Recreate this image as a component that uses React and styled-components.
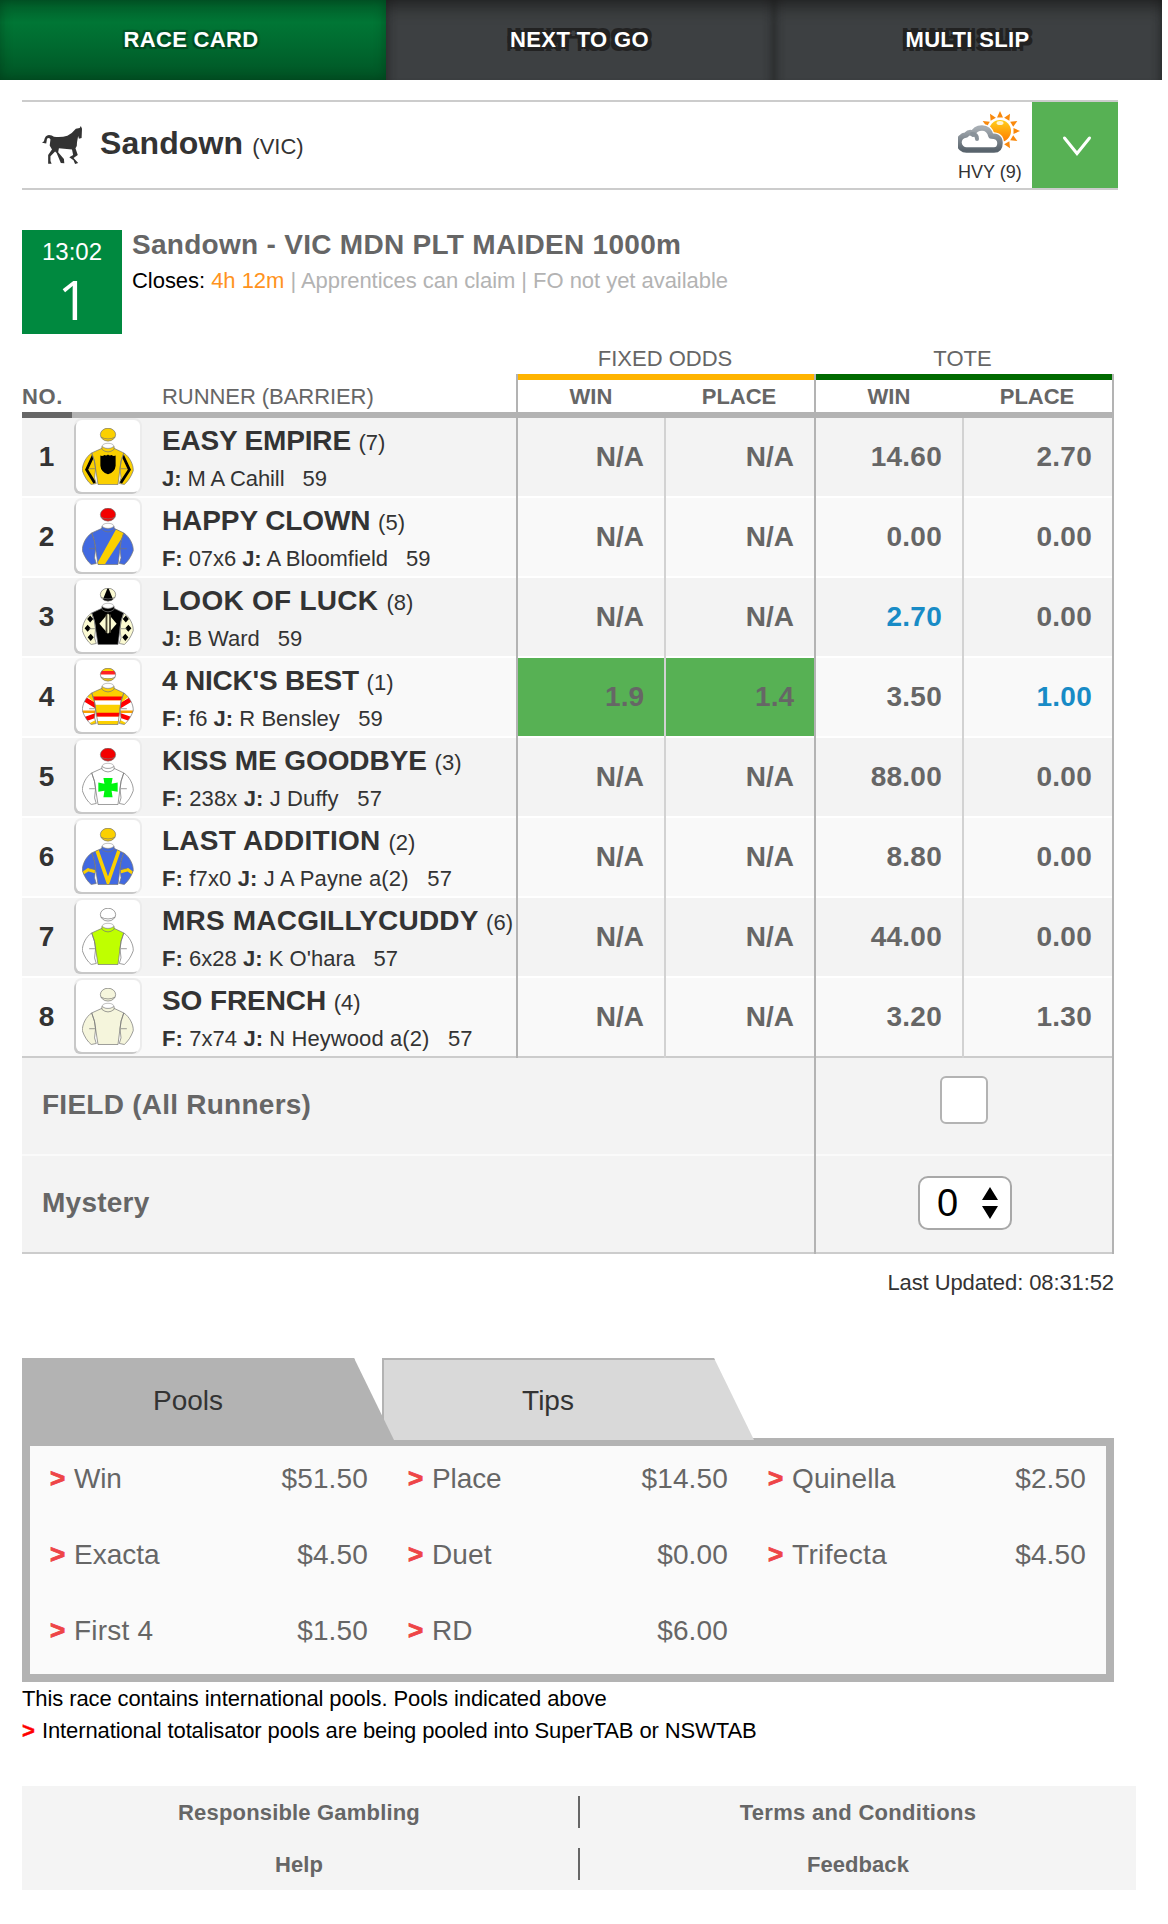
import React from "react";
import styled, { createGlobalStyle } from "styled-components";

const GlobalStyle = createGlobalStyle`
  body {
    margin: 0;
    background: #fff;
    font-family: "Liberation Sans", Arial, Helvetica, sans-serif;
    color: #333;
    font-size: 22px;
  }
  *, *::before, *::after { box-sizing: border-box; }
`;

const Page = styled.div`
  width: 1168px;
  height: 1924px;
  overflow: hidden;
  white-space: nowrap;
`;

const Nav = styled.nav`
  display: grid;
  grid-template-columns: 386px 388px 388px;
  width: 1162px;
  height: 80px;
  background: #3d4042;
`;

const NavTab = styled.a`
  padding-right: ${(p) => (p.$active ? 4 : 1)}px;
  text-align: center;
  font-size: 22px;
  line-height: 80px;
  font-weight: bold;
  color: #fff;
  letter-spacing: 0.35px;
  background: ${(p) =>
    p.$active ? "linear-gradient(#005c29, #007635 28%, #006b30 55%, #005425)" : "#3d4042"};
  box-shadow: ${(p) =>
    p.$active
      ? "inset 0 0 12px rgba(0, 40, 15, 0.45)"
      : "inset 0 14px 16px -8px rgba(20, 20, 20, 0.7), inset 10px 0 10px -8px rgba(25, 25, 25, 0.4), inset -10px 0 10px -8px rgba(25, 25, 25, 0.4)"};
  text-shadow: ${(p) =>
    p.$active
      ? "-2px -2px 1px #00582a, 2px -2px 1px #00582a, -2px 2px 1px #00471f, 2px 2px 1px #00471f"
      : "-4px -4px 0 #222, 4px -4px 0 #222, -4px 4px 0 #222, 4px 4px 0 #222, -2px -2px 0 #222, 2px -2px 0 #222, -2px 2px 0 #222, 2px 2px 0 #222"};
`;

const Content = styled.main`
  padding: 20px 0 0 22px;
`;

const Venue = styled.header`
  display: flex;
  width: 1096px;
  height: 90px;
  border-top: 2px solid #ccc;
  border-bottom: 2px solid #ccc;
`;

const VenueIcon = styled.div`
  width: 78px;
  padding: 24px 0 0 20px;
  svg { display: block; }
`;

const VenueName = styled.h1`
  flex: 1;
  margin: 0;
  font-size: 32px;
  line-height: 82px;
  letter-spacing: 0.15px;
  small {
    font-size: 22px;
    font-weight: normal;
    letter-spacing: 0;
  }
`;

const Weather = styled.div`
  width: 74px;
  padding-top: 8px;
  font-size: 18px;
  line-height: 24px;
  svg { display: block; margin-bottom: 6px; }
`;

const Dropdown = styled.button`
  width: 86px;
  height: 86px;
  padding: 0;
  border: 0;
  background: #57b154;
  svg { display: block; margin: 1px 0 0 30px; }
`;

const Race = styled.section`
  display: flex;
  gap: 10px;
  height: 104px;
  margin-top: 40px;
`;

const RaceBox = styled.div`
  width: 100px;
  height: 104px;
  background: #00893f;
  color: #fff;
  text-align: center;
  font-size: 24px;
  line-height: 44px;
  b {
    display: block;
    padding-left: 3px;
    font-family: "Open Sans", "Liberation Sans", sans-serif;
    font-weight: normal;
    font-size: 55px;
    line-height: 50px;
  }
`;

const RaceTitle = styled.h2`
  margin: 0;
  font-size: 28px;
  line-height: 30px;
  letter-spacing: 0.29px;
  color: #666;
`;

const RaceInfo = styled.p`
  margin: 5px 0 0;
  line-height: 32px;
  letter-spacing: -0.04px;
  color: #b3b3b3;
  b { font-weight: normal; color: #000; }
  em { font-style: normal; color: #ff9320; }
`;

const Table = styled.section`
  width: 1092px;
  margin-top: 6px;
`;

const Columns = styled.div`
  display: grid;
  grid-template-columns: ${(p) =>
    p.$kind === "runner"
      ? "494px 148px 150px 148px 152px"
      : p.$kind === "extra"
      ? "792px 300px"
      : "494px 298px 300px"};
`;

const GroupLabel = styled.div`
  height: 34px;
  padding-right: ${(p) => (p.$last ? 3 : 0)}px;
  line-height: 38px;
  text-align: center;
  color: #666;
`;

const MainHead = styled.div`
  display: flex;
  height: 44px;
  line-height: 45px;
  letter-spacing: -0.06px;
  color: #666;
  box-shadow: inset 0 -6px 0 #b3b3b3;
`;

const NoHead = styled.div`
  width: 50px;
  margin-right: 90px;
  font-weight: bold;
  letter-spacing: 0.6px;
  box-shadow: inset 0 -6px 0 #666;
`;

const OddsHead = styled.div`
  display: flex;
  height: 44px;
  border-left: 2px solid #b3b3b3;
  border-right: ${(p) => (p.$last ? "2px solid #b3b3b3" : "0")};
  box-shadow: inset 0 6px 0 ${(p) => p.$color}, inset 0 -6px 0 #b3b3b3;
  line-height: 45px;
  font-weight: bold;
  color: #666;
  text-align: center;
  span { flex: 1; padding-right: 2px; }
`;

const rowBg = (p) => (p.$odd ? "#f3f3f3" : "#f9f9f9");
const rowLine = (p) => `inset 0 -2px 0 ${p.$final ? "#ccc" : "#fff"}`;

const RunnerCell = styled.div`
  display: flex;
  height: 80px;
  background: ${rowBg};
  box-shadow: ${rowLine};
`;

const RunnerNo = styled.div`
  width: 50px;
  padding-right: 1px;
  text-align: center;
  font-size: 28px;
  font-weight: bold;
  line-height: 77px;
`;

const Silks = styled.div`
  width: 64px;
  height: 72px;
  margin: 2px 22px 0 4px;
  padding: 8px 6px;
  border-radius: 6px;
  background: #fff;
  box-shadow: -2px 2px 0 #c8c8c8, 0 0 0 2px #ececec;
  svg { display: block; }
`;

const RunnerName = styled.div`
  font-size: 28px;
  font-weight: bold;
  line-height: 46px;
  letter-spacing: ${(p) => p.$ls || 0}px;
  small {
    font-size: 22px;
    font-weight: normal;
    letter-spacing: 0;
  }
`;

const RunnerInfo = styled.div`
  line-height: 26px;
  letter-spacing: ${(p) => p.$ls || 0}px;
  white-space: pre;
`;

const OddsCell = styled.div`
  height: 80px;
  padding-right: 20px;
  border-left: 2px solid ${(p) => (p.$thin ? "#d2d2d2" : "#b3b3b3")};
  border-right: ${(p) => (p.$last ? "2px solid #b3b3b3" : "0")};
  background: ${(p) => (p.$picked ? "#57b154" : rowBg(p))};
  box-shadow: ${rowLine};
  color: ${(p) => (p.$hot ? "#188bc6" : "#666")};
  font-size: 28px;
  font-weight: bold;
  letter-spacing: ${(p) => (p.$tote ? 0.25 : 0)}px;
  line-height: 77px;
  text-align: right;
`;

const ExtraLabel = styled.div`
  height: 98px;
  padding-left: 20px;
  background: #f3f3f3;
  box-shadow: inset 0 -2px 0 ${(p) => (p.$final ? "#ccc" : "#fafafa")};
  color: #666;
  font-size: 28px;
  font-weight: bold;
  letter-spacing: 0.25px;
  line-height: 93px;
`;

const ExtraCell = styled.div`
  display: flex;
  justify-content: center;
  align-items: flex-start;
  padding-top: 18px;
  border-left: 2px solid #b3b3b3;
  border-right: 2px solid #b3b3b3;
  background: #f3f3f3;
  box-shadow: inset 0 -2px 0 ${(p) => (p.$final ? "#ccc" : "#fafafa")};
`;

const Checkbox = styled.div`
  width: 48px;
  height: 48px;
  border: 2px solid #b3b3b3;
  border-radius: 6px;
  background: #fff;
`;

const Select = styled.div`
  display: flex;
  align-items: center;
  justify-content: space-between;
  width: 94px;
  height: 54px;
  margin: 2px 0 0 2px;
  padding: 0 12px 0 17px;
  border: 2px solid #a8a8a8;
  border-radius: 10px;
  background: #fff;
  color: #000;
  font-size: 38px;
  line-height: 50px;
`;

const Updated = styled.p`
  width: 1092px;
  margin: 13px 0 0;
  line-height: 32px;
  letter-spacing: -0.1px;
  text-align: right;
`;

const Tabs = styled.div`
  display: flex;
  position: relative;
  height: 82px;
  margin: 59px 0 -2px;
`;

const PoolTab = styled.a`
  width: 372px;
  height: 82px;
  padding-right: 42px;
  margin-right: -12px;
  position: relative;
  z-index: ${(p) => (p.$active ? 2 : 1)};
  clip-path: polygon(0 0, 332px 0, 372px 100%, 0 100%);
  background: ${(p) => (p.$active ? "#b3b3b3" : "#d9d9d9")};
  border-top: 2px solid #b3b3b3;
  border-left: 2px solid #b3b3b3;
  font-size: 28px;
  line-height: 81px;
  text-align: center;
`;

const PoolPanel = styled.div`
  display: grid;
  grid-template-columns: 358px 360px 358px;
  grid-auto-rows: 76px;
  width: 1092px;
  height: 244px;
  border: 8px solid #b3b3b3;
  background: #fafafa;
  font-size: 28px;
  line-height: 65px;
  color: #666;
`;

const Pool = styled.div`
  display: flex;
  padding: 0 ${(p) => p.$right}px 0 20px;
  letter-spacing: 0.15px;
  span { flex: 1; letter-spacing: ${(p) => p.$ls || 0}px; }
`;

const Marker = styled.b`
  width: ${(p) => (p.$small ? "20px" : "24px")};
  display: inline-block;
  color: ${(p) => (p.$small ? "#f00" : "#ee4547")};
  font-size: ${(p) => (p.$small ? "22px" : "26px")};
  -webkit-text-stroke: ${(p) => (p.$small ? "0.5px #f00" : "0.9px #ee4547")};
`;

const Note = styled.p`
  margin: 0;
  line-height: 32px;
  color: #000;
  letter-spacing: ${(p) => p.$ls || 0}px;
`;

const Notes = styled.div`
  padding-top: 1px;
`;

const Footer = styled.footer`
  display: grid;
  grid-template-columns: 556px 558px;
  grid-auto-rows: 52px;
  width: 1114px;
  height: 104px;
  margin-top: 39px;
  background: #f4f4f4;
`;

const FooterLink = styled.a`
  height: 32px;
  margin-top: 10px;
  padding-right: ${(p) => (p.$divided ? 0 : 2)}px;
  border-left: ${(p) => (p.$divided ? "2px solid #666" : "0")};
  color: #666;
  font-weight: bold;
  letter-spacing: ${(p) => p.$ls}px;
  line-height: 33px;
  text-align: center;
`;

const HorseIcon = () => (
  <svg width="40" height="38" viewBox="0 0 104 113" preserveAspectRatio="none" fill="#333">
    <path d="M101 0 L104 8 L103 36 L96 38 L94 30 L91 48 Q92 60 87 66 L93 86 L82 95 L94 110 L86 113 L82 102 L71 93 L81 86 L78 70 L44 66 L42 78 L57 98 L58 111 L49 110 L38 80 L34 76 L22 90 L22 104 L25 112 L16 112 L16 86 L26 70 L20 58 L22 40 Q18 33 13 38 L11 52 L0 50 L5 45 Q8 27 18 27 Q26 27 31 32 Q50 35 66 29 Q80 20 88 8 L98 6 Z" />
  </svg>
);

const SunCloudIcon = () => (
  <svg width="64" height="44" viewBox="0 0 64 44">
    <defs>
      <linearGradient id="sun" x1="0" y1="0" x2="0" y2="1">
        <stop offset="0" stopColor="#ffcf1a" />
        <stop offset="1" stopColor="#ff7a00" />
      </linearGradient>
      <linearGradient id="cloud" x1="0" y1="0" x2="0" y2="1">
        <stop offset="0" stopColor="#a6adb3" />
        <stop offset="1" stopColor="#59646d" />
      </linearGradient>
    </defs>
    {[...Array(12)].map((_, i) => (
      <path key={i} d="M39 7.5 L42 1 L45 7.5 Z" fill="#f9890c" transform={`rotate(${i * 30} 42 21)`} />
    ))}
    <circle cx="42" cy="21" r="11" fill="url(#sun)" />
    <ellipse cx="42" cy="13" rx="3.5" ry="2" fill="#fff" opacity="0.8" />
    <path
      d="M9 40 A7.5 7.5 0 0 1 8 25 Q12 21 15 24 Q17 18 24 18 Q31 18 33 26 Q42 26 42 33 Q42 40 36 40 Z"
      fill="#fff" stroke="#fff" strokeWidth="8"
    />
    <path
      d="M9 40 A7.5 7.5 0 0 1 8 25 Q12 21 15 24 Q17 18 24 18 Q31 18 33 26 Q42 26 42 33 Q42 40 36 40 Z"
      fill="#fff" stroke="url(#cloud)" strokeWidth="5.5" strokeLinejoin="round"
    />
    <path d="M14 24 Q19 24 19 29" fill="none" stroke="#89929a" strokeWidth="4" strokeLinecap="round" />
  </svg>
);

const ChevronIcon = () => (
  <svg width="30" height="22" viewBox="0 0 30 22" fill="none" stroke="#fff" strokeWidth="3" strokeLinecap="round">
    <path d="M2.5 3 L15 18.5 L27.5 3" />
  </svg>
);

const ArrowsIcon = () => (
  <svg width="16" height="32" viewBox="0 0 16 32">
    <path d="M8 0 L16 13 H0 Z M8 32 L0 19 H16 Z" />
  </svg>
);

const BODY = "M9.5 24.5 L19.5 20 Q25.5 24.5 31.5 20 L41 24.5 Q37.5 33 37.3 40 L35.3 55.5 H15.7 L13.3 40 Q13 33 9.5 24.5 Z";
const LEFT = "M9.5 24.5 C4 28 0 36 0.3 42 Q3.5 51 9 55.5 L14 54.5 L12.3 49 L13.3 40 Q13 33 9.5 24.5 Z";
const RIGHT = "M41 24.5 C46.5 28 50.7 36 50.3 42 Q47 51 41.5 55.5 L36.6 54.5 L38.3 49 L37.3 40 Q37.5 33 41 24.5 Z";

function SilksIcon({ id, cap, body, sleeve, capArt, bodyArt, sleeveArt, line = "#777" }) {
  return (
    <svg width="52" height="57" viewBox="0 0 51 56">
      <clipPath id={`b${id}`}><path d={BODY} /></clipPath>
      <clipPath id={`s${id}`}><path d={`${LEFT} ${RIGHT}`} /></clipPath>
      <clipPath id={`c${id}`}><ellipse cx="25.5" cy="6.5" rx="7.5" ry="6.5" /></clipPath>
      <ellipse cx="25.5" cy="6.5" rx="7.5" ry="6.5" fill={cap} />
      <g clipPath={`url(#c${id})`}>{capArt}</g>
      <g fill="none" stroke={line} strokeWidth="0.7">
        <ellipse cx="25.5" cy="6.5" rx="7.5" ry="6.3" />
        <path d="M18.5 9 Q25.5 12.5 32.5 9" />
      </g>
      <path d={`${LEFT} ${RIGHT}`} fill={sleeve} />
      <g clipPath={`url(#s${id})`}>{sleeveArt}</g>
      <path d={BODY} fill={body} />
      <g clipPath={`url(#b${id})`}>{bodyArt}</g>
      <path d={`${LEFT} ${RIGHT} ${BODY}`} fill="none" stroke={line} strokeWidth="0.7" />
      <path d="M7 40 H13 M44 40 H38" stroke={line} strokeWidth="0.7" />
      <path d="M19.5 18 Q25.5 22 31.5 18 L31.5 21 Q25.5 26 19.5 21 Z" fill={body} stroke={line} strokeWidth="0.7" />
      <ellipse cx="25.5" cy="17.5" rx="5.5" ry="2.5" fill="#fff" stroke="#999" strokeWidth="0.6" />
    </svg>
  );
}

const YELLOW = "#fbd000";
const BLUE = "#4169e1";
const CREAM = "#fbfad2";

const silks = {
  1: {
    cap: YELLOW, body: YELLOW, sleeve: YELLOW,
    bodyArt: <path d="M18 27 Q20 28 22 26.5 Q24 27.5 25.5 26 Q27 27.5 29 26.5 Q31 28 33 27 V37 Q32.5 43 25.5 45.5 Q18.5 43 18 37 Z" />,
    sleeveArt: <path d="M11 27 L4.5 41 L12.5 54 M40 27 L46.5 41 L38 54" fill="none" stroke="#000" strokeWidth="2.8" />,
  },
  2: {
    cap: "#f30000", body: BLUE, sleeve: BLUE,
    bodyArt: <path d="M34 20 L42 25 L22 56 H14 Z" fill={YELLOW} />,
  },
  3: {
    cap: CREAM, body: "#000", sleeve: CREAM,
    capArt: <path d="M25.5 -1 L32 15 H19 Z" />,
    bodyArt: (
      <g>
        <path d="M25.5 25 L34 35 L25.5 45 L17 35 Z" fill={CREAM} />
        <path d="M24 26 V44 M27.5 26 V44" stroke="#4a4636" strokeWidth="1.8" />
      </g>
    ),
    sleeveArt: <path d="M8 27 l3 3.5 l-3 3.5 l-3 -3.5 Z M5.5 36 l3 3.5 l-3 3.5 l-3 -3.5 Z M8.500 45 l3 3.5 l-3 3.5 l-3 -3.5 Z M43 27 l3 3.5 l-3 3.5 l-3 -3.5 Z M45.5 36 l3 3.5 l-3 3.5 l-3 -3.5 Z M42.5 45 l3 3.5 l-3 3.5 l-3 -3.5 Z" />,
  },
  4: {
    cap: "#fff", body: YELLOW, sleeve: "#fff",
    capArt: (
      <g>
        <path d="M16 0 H35 V3 H16 Z" fill={YELLOW} />
        <path d="M16 3 H35 V6.5 H16 Z" fill="#f22" />
        <path d="M16 10 H35 V14 H16 Z" fill={YELLOW} />
      </g>
    ),
    bodyArt: (
      <g>
        <path d="M8 28 H43 V32 H8 Z M8 44 H43 V48 H8 Z" fill="#f00" />
        <path d="M8 32 H43 V36 H8 Z M8 48 H43 V52 H8 Z" fill="#fff" />
      </g>
    ),
    sleeveArt: (
      <g fill="none" strokeWidth="4.5">
        <path d="M4 22 L15 31 M47 22 L36 31" stroke={YELLOW} strokeWidth="8" />
        <path d="M0 29 L15 38 M51 29 L36 38 M1 51 L15 46 M50 51 L36 46" stroke="#f00" />
        <path d="M0 43 H15 M51 43 H36" stroke="#f8a000" strokeWidth="2.5" />
        <path d="M7 56 L15 52 M44 56 L36 52" stroke={YELLOW} strokeWidth="3" />
      </g>
    ),
  },
  5: {
    cap: "#f30000", body: "#fff", sleeve: "#fff",
    bodyArt: <path d="M21 29.5 H30 L29 35 L35 34 V43 L29 42 L30 48.5 H21 L22 42 L16 43 V34 L22 35 Z" fill="#00f510" />,
  },
  6: {
    cap: YELLOW, body: BLUE, sleeve: BLUE,
    bodyArt: <path d="M14 20 L25.5 53 L37 20" fill="none" stroke={YELLOW} strokeWidth="3.5" />,
    sleeveArt: <path d="M0 45 L6 41 L13 43 M50.5 45 L45 41 L38 43" fill="none" stroke={YELLOW} strokeWidth="3" />,
  },
  7: { cap: "#fff", body: "#bfff00", sleeve: "#fff" },
  8: { cap: "#f5f5dc", body: "#f5f5dc", sleeve: "#f5f5dc" },
};

const runners = [
  { no: 1, name: "EASY EMPIRE", ls: -0.18, infoLs: -0.08, bar: 7, jockey: "M A Cahill", kg: 59, odds: ["N/A", "N/A", "14.60", "2.70"] },
  { no: 2, name: "HAPPY CLOWN", ls: -0.1, infoLs: -0.07, bar: 5, form: "07x6", jockey: "A Bloomfield", kg: 59, odds: ["N/A", "N/A", "0.00", "0.00"] },
  { no: 3, name: "LOOK OF LUCK", ls: 0.27, infoLs: -0.07, bar: 8, jockey: "B Ward", kg: 59, odds: ["N/A", "N/A", "2.70", "0.00"], hot: 2 },
  { no: 4, name: "4 NICK'S BEST", ls: -0.2, infoLs: 0.03, bar: 1, form: "f6", jockey: "R Bensley", kg: 59, odds: ["1.9", "1.4", "3.50", "1.00"], hot: 3, picked: true },
  { no: 5, name: "KISS ME GOODBYE", ls: -0.08, infoLs: 0.12, bar: 3, form: "238x", jockey: "J Duffy", kg: 57, odds: ["N/A", "N/A", "88.00", "0.00"] },
  { no: 6, name: "LAST ADDITION", ls: 0.25, infoLs: 0.13, bar: 2, form: "f7x0", jockey: "J A Payne a(2)", kg: 57, odds: ["N/A", "N/A", "8.80", "0.00"] },
  { no: 7, name: "MRS MACGILLYCUDDY", ls: 0.2, infoLs: 0.03, bar: 6, form: "6x28", jockey: "K O'hara", kg: 57, odds: ["N/A", "N/A", "44.00", "0.00"] },
  { no: 8, name: "SO FRENCH", ls: -0.1, infoLs: 0.08, bar: 4, form: "7x74", jockey: "N Heywood a(2)", kg: 57, odds: ["N/A", "N/A", "3.20", "1.30"] },
];

const pools = [
  ["Win", "$51.50", 20, -0.2], ["Place", "$14.50", 20, -0.1], ["Quinella", "$2.50", 20, 0.1],
  ["Exacta", "$4.50", 20, 0], ["Duet", "$0.00", 20, 0.1], ["Trifecta", "$4.50", 20, 0.35],
  ["First 4", "$1.50", 20, 0.2], ["RD", "$6.00", 20, 0],
];

function Runner({ r }) {
  const shade = { $odd: r.no % 2 === 1, $final: r.no === 8 };
  return (
    <Columns $kind="runner">
      <RunnerCell {...shade}>
        <RunnerNo>{r.no}</RunnerNo>
        <Silks><SilksIcon id={r.no} {...silks[r.no]} /></Silks>
        <div>
          <RunnerName $ls={r.ls}>{r.name} <small>({r.bar})</small></RunnerName>
          <RunnerInfo $ls={r.infoLs}>
            {r.form && <><b>F:</b> {r.form} </>}
            <b>J:</b> {r.jockey}{"   "}{r.kg}
          </RunnerInfo>
        </div>
      </RunnerCell>
      {r.odds.map((value, i) => (
        <OddsCell
          key={i}
          {...shade}
          $thin={i % 2 === 1}
          $tote={i > 1}
          $last={i === 3}
          $hot={r.hot === i}
          $picked={r.picked && i < 2}
        >
          {value}
        </OddsCell>
      ))}
    </Columns>
  );
}

export default function App() {
  return (
    <Page>
      <GlobalStyle />
      <Nav>
        <NavTab $active>RACE CARD</NavTab>
        <NavTab>NEXT TO GO</NavTab>
        <NavTab>MULTI SLIP</NavTab>
      </Nav>
      <Content>
        <Venue>
          <VenueIcon><HorseIcon /></VenueIcon>
          <VenueName>Sandown <small>(VIC)</small></VenueName>
          <Weather><SunCloudIcon />HVY (9)</Weather>
          <Dropdown><ChevronIcon /></Dropdown>
        </Venue>
        <Race>
          <RaceBox>13:02<b>1</b></RaceBox>
          <div>
            <RaceTitle>Sandown - VIC MDN PLT MAIDEN 1000m</RaceTitle>
            <RaceInfo>
              <b>Closes:</b> <em>4h 12m</em> | Apprentices can claim | FO not yet available
            </RaceInfo>
          </div>
        </Race>
        <Table>
          <Columns>
            <GroupLabel />
            <GroupLabel>FIXED ODDS</GroupLabel>
            <GroupLabel $last>TOTE</GroupLabel>
            <MainHead><NoHead>NO.</NoHead>RUNNER (BARRIER)</MainHead>
            <OddsHead $color="#ffb400"><span>WIN</span><span>PLACE</span></OddsHead>
            <OddsHead $color="#006a00" $last><span>WIN</span><span>PLACE</span></OddsHead>
          </Columns>
          {runners.map((r) => <Runner key={r.no} r={r} />)}
          <Columns $kind="extra">
            <ExtraLabel>FIELD (All Runners)</ExtraLabel>
            <ExtraCell><Checkbox /></ExtraCell>
            <ExtraLabel $final>Mystery</ExtraLabel>
            <ExtraCell $final><Select>0<ArrowsIcon /></Select></ExtraCell>
          </Columns>
        </Table>
        <Updated>Last Updated: 08:31:52</Updated>
        <Tabs>
          <PoolTab $active>Pools</PoolTab>
          <PoolTab>Tips</PoolTab>
        </Tabs>
        <PoolPanel>
          {pools.map(([name, total, right, ls]) => (
            <Pool key={name} $right={right} $ls={ls}><Marker>&gt;</Marker><span>{name}</span>{total}</Pool>
          ))}
        </PoolPanel>
        <Notes>
          <Note $ls={-0.1}>This race contains international pools. Pools indicated above</Note>
          <Note $ls={-0.12}><Marker $small>&gt;</Marker>International totalisator pools are being pooled into SuperTAB or NSWTAB</Note>
        </Notes>
        <Footer>
          <FooterLink $ls={0.18}>Responsible Gambling</FooterLink>
          <FooterLink $divided $ls={0.3}>Terms and Conditions</FooterLink>
          <FooterLink $ls={0.1}>Help</FooterLink>
          <FooterLink $divided $ls={0.05}>Feedback</FooterLink>
        </Footer>
      </Content>
    </Page>
  );
}
